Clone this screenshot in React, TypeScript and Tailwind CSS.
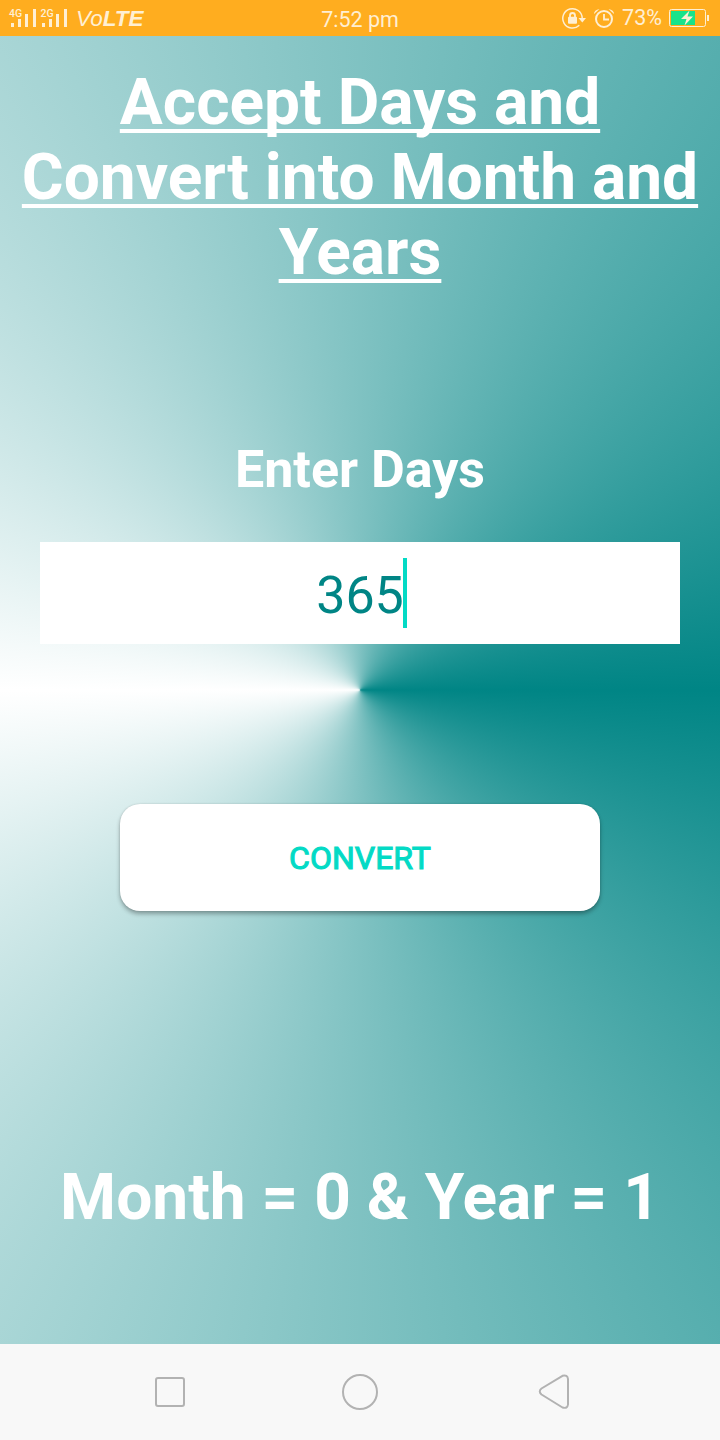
export default function App() {
  return (
    <main className="flex h-[1440px] w-[720px] flex-col overflow-hidden font-['Roboto',sans-serif]">
      <header className="grid h-9 shrink-0 grid-cols-3 items-center bg-[#ffad1f] text-[#ffefd3]">
        <div className="flex items-center pl-2">
          <svg width="60" height="36" viewBox="8 0 60 36" fill="currentColor" fontFamily="Roboto" fontWeight="500" fontSize="10.5">
            <text x="9" y="16.500">4G</text><text x="40.500" y="16.500">2G</text>
            <path d="M11 23h3v4h-3zM18 19h3v8h-3zM25 14h3v13h-3zM33 9h3v18h-3zM42 23h3v4h-3zM49 19h3v8h-3zM56 14h3v13h-3zM64 9h3v18h-3z" />
          </svg>
          <span className="ml-2 pt-[2px] font-['Liberation_Sans',sans-serif] text-[22.5px] italic leading-[34px]">Vo<b>LTE</b></span>
        </div>
        <time className="pt-[3px] text-center text-[21.5px] leading-[33px]">7:52 pm</time>
        <div className="flex items-center justify-end pr-2.5">
          <svg width="56" height="36" viewBox="559 0 56 36" fill="none" stroke="currentColor" strokeWidth="1.5">
            <path d="M579.300 25.300A9.700 9.700 0 1 1 582.200 18" />
            <path d="M578.500 18h7.500l-3.700 4.500z" fill="currentColor" stroke="none" />
            <rect x="568" y="16.800" width="9" height="7" rx="1" fill="currentColor" stroke="none" />
            <path d="M570 17.500v-2a2.500 2.500 0 0 1 5 0v2" strokeWidth="1.800" />
            <circle cx="604" cy="19" r="8" strokeWidth="2" /><path d="M604 14v5.500h5" strokeWidth="1.800" />
            <path d="M594 14q0-4 5.500-5zM614 14q0-4-5.500-5z" fill="currentColor" stroke="none" />
          </svg>
          <span className="ml-[7px] pb-px text-[21.5px] leading-[35px]">73%</span>
          <svg className="ml-1.5" width="42" height="36" viewBox="668 0 42 36"><rect x="669.500" y="9.500" width="36" height="17" rx="2" fill="none" stroke="currentColor" /><path fill="#18e38a" d="M671 11h24v14h-24z" /><path fill="currentColor" d="M707 15h2v6h-2zM689.500 10.500l-8.500 8.500h5.500l-2 6.500 8.500-9h-5.500z" /></svg>
        </div>
      </header>
      <section className="flex h-[1308px] shrink-0 flex-col items-center bg-[conic-gradient(from_90deg_at_50%_50%,#008585,#ffffff_50%,#008585)] text-white">
        <h1 className="mt-[29px] whitespace-nowrap text-center text-[64px] font-bold leading-[75px] underline decoration-4 underline-offset-[5px] [text-decoration-skip-ink:none]">Accept Days and<br />Convert into Month and<br />Years</h1>
        <h2 className="mt-[149px] text-[52px] font-bold leading-[61px]">Enter Days</h2>
        <div className="mt-[42px] flex h-[102px] w-[640px] items-center justify-center bg-white pl-[3px] text-[52px] text-[#008585]">
          <span className="-mr-px pt-[5px]">365</span><span className="h-[70px] w-1 bg-[#03dac5]" />
        </div>
        <button className="mt-40 h-[107px] w-[480px] rounded-[20px] bg-white pt-px text-[32px] font-normal text-[#03dac5] shadow-[0_3px_4px_rgba(0,0,0,0.3),0_0_2px_rgba(0,0,0,0.15)] [-webkit-text-stroke:1.1px_#03dac5]">CONVERT</button>
        <p className="mt-[249px] text-[64px] font-bold leading-[75px]">Month = 0 &amp; Year = 1</p>
      </section>
      <nav className="flex h-24 shrink-0 items-center bg-[#f8f8f8]">
        <svg width="720" height="96" viewBox="0 1344 720 96" fill="none" stroke="#b2b2b2" strokeWidth="2" strokeLinejoin="round">
          <rect x="156" y="1378" width="28" height="28" rx="2" /><circle cx="360" cy="1392" r="17" />
          <path d="M562.500 1375.800L541.500 1388.500q-3.500 2.800 0 6L562.500 1407.500q5 1.500 5.500-3v-25.500q-.5-4.500-5.500-3.200z" />
        </svg>
      </nav>
    </main>
  );
}
